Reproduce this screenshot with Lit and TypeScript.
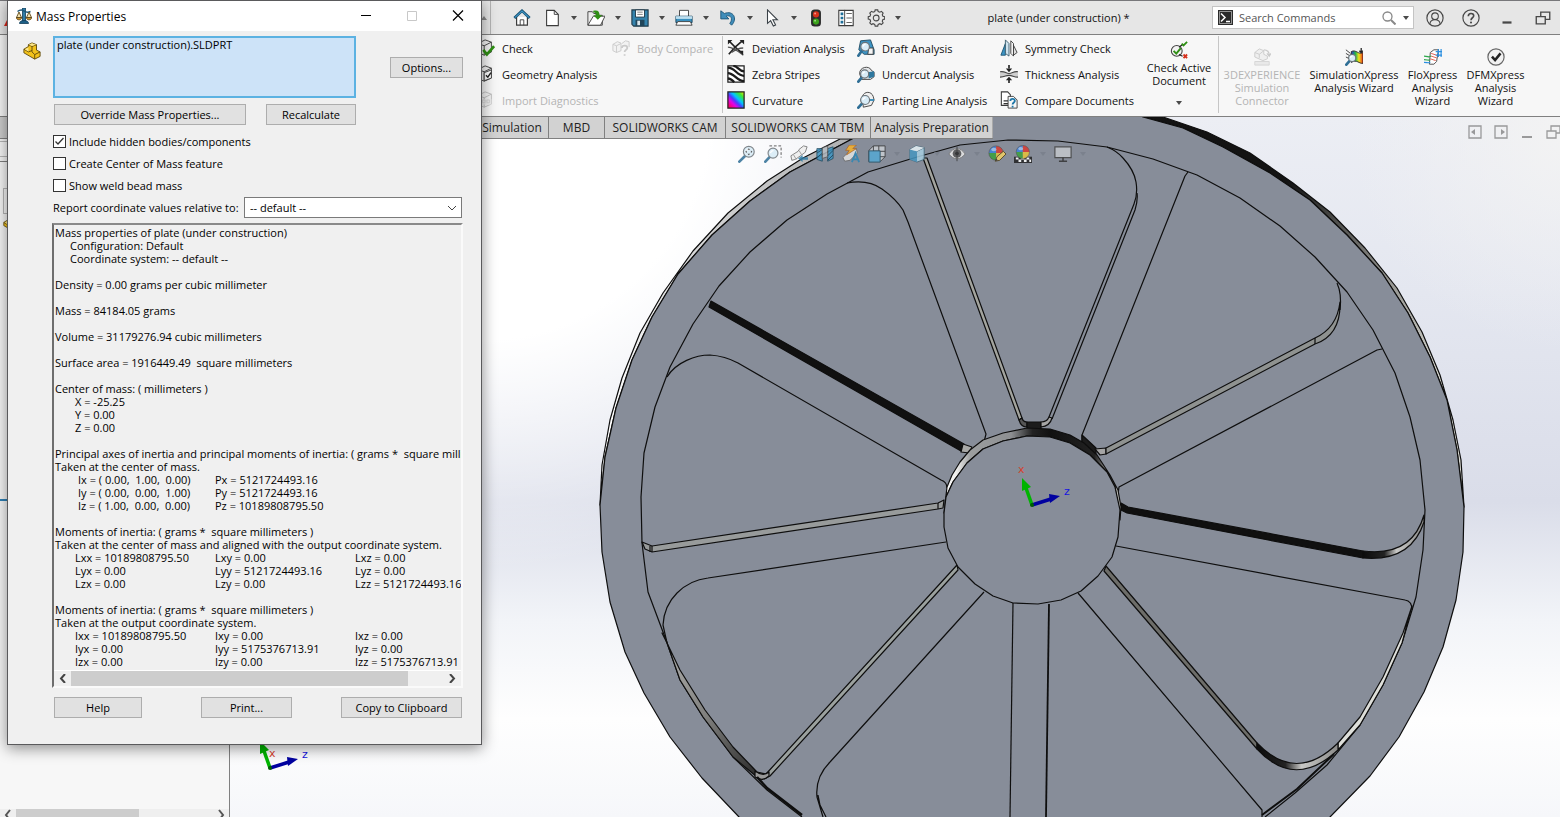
import { LitElement, html, svg, css } from "lit";
import { customElement, state } from "lit/decorators.js";

const K = "#3c3c3c";
const B = "#1f6f99";

/* Shared 20x20 glyphs */
const lens = (x: number, y: number, r: number) => svg`
  <path d="M${x - r * 0.6} ${y + r * 0.7}L1.5 18.5" stroke="#2f6f96" stroke-width="3" stroke-linecap="round"/>
  <circle cx=${x} cy=${y} r=${r} fill="#d8ecf7" stroke="#6b7378" stroke-width="1.3"/>
  <path d="M${x - r * 0.5} ${y}a${r * 0.6} ${r * 0.6} 0 0 1 ${r * 0.6} ${-r * 0.5}" stroke="#fff" stroke-width="1.4" fill="none"/>`;

const cube = svg`<path d="M1 5L9 1l7 2.5v11L8 18l-7-3z" fill="#f2f2f2" stroke="${K}"/><path d="M1 5l7 2.5L16 3.500M8 7.500V18" fill="none" stroke="${K}"/>`;

const ball = svg`
  <path d="M9 9L9 1A8 8 0 0 0 1 9z" fill="#3d82dd"/><path d="M9 9V1a8 8 0 0 1 8 8z" fill="#d93a32"/>
  <path d="M9 9H1a8 8 0 0 0 8 8z" fill="#3aa03c"/><path d="M9 9h8a8 8 0 0 1-8 8z" fill="#e8c43a"/>
  <ellipse cx="6.500" cy="5" rx="3" ry="2" fill="#fff" opacity=".5"/><circle cx="9" cy="9" r="8" fill="none" stroke="#444" stroke-width=".6"/>`;

const part = svg`<path d="M1 8l5-3V3l4-2 5 2v6l4 2v5l-6 3L1 12z" fill="#f2c21b" stroke="#5e480a"/><path d="M6 3l4 2 5-2M10 5v6l3 3 6-3M13 14v5M1 8l5 3 4-1.500" fill="none" stroke="#5e480a"/><path d="M6.500 3L10 1.500 14.500 3 10 4.500zM2 8l4-2v4.500z" fill="#fbe68c"/>`;

const icons: Record<string, unknown> = {
  home: svg`<path d="M4 9v9h12V9" fill="#fff" stroke="${K}" stroke-width="1.300"/><path d="M8 18v-6h4v6" fill="none" stroke="${K}"/><path d="M1.500 10L10 2l8.500 8" fill="none" stroke="#174f70" stroke-width="3"/><path d="M2 9.500L10 2.200l8 7.300" fill="none" stroke="#3d94c4" stroke-width="1.200"/>`,
  file: svg`<path d="M4 1.500h8.500L17 6v12.500H4z" fill="#fff" stroke="${K}" stroke-width="1.200"/><path d="M12.500 1.500V6H17" fill="none" stroke="${K}"/>`,
  open: svg`<path d="M1 18V3h5l1.500 2H10v2h7v11z" fill="#ececec" stroke="${K}"/><path d="M1 18L7 8h13l-5 10z" fill="#fff" stroke="${K}"/><path d="M7 2c5-1.500 7 1 7 5h3l-5 5-5-5h3c0-2-.5-3.500-3-3z" fill="#2f8f14"/>`,
  save: svg`<path d="M1 1h18v18H3l-2-2z" fill="#3583ad" stroke="#1d3746" stroke-width="1.200"/><path d="M5 1h10v8H5z" fill="#fff" stroke="#1d3746"/><path d="M7 3.500h6M7 6h6" stroke="#777"/><path d="M5 12h10v7H5z" fill="#22465a"/><path d="M7 13h3v5H7z" fill="#dce6ec"/>`,
  print: svg`<path d="M5 8V1.500h10V8" fill="#fff" stroke="${K}"/><path d="M1 8h18v7H1z" fill="#3a91c0" stroke="#173f57"/><path d="M1 8h18v3H1z" fill="#bfe0f0"/><path d="M3 14h14l2 4H1z" fill="#fff" stroke="${K}"/>`,
  undo: svg`<path d="M2 2v9h9L8 8c5-2 8 3 4 8l2 2C21 11 16 1 6 5z" fill="#3f8dba" stroke="#1d5677"/>`,
  cursor: svg`<path d="M5 1v15l3.500-3 3 6 2.500-1.200-3-5.800H16z" fill="#fff" stroke="#3b4248" stroke-width="1.200"/>`,
  light: svg`<rect x="4.500" y=".5" width="11" height="19" rx="4" fill="#2c2c2c"/><circle cx="10" cy="6" r="3.400" fill="#d6301c"/><circle cx="10" cy="14" r="3.400" fill="#3ca31c"/><circle cx="9" cy="5" r="1" fill="#f7a090"/><circle cx="9" cy="13" r="1" fill="#a5e28e"/>`,
  list: svg`<path d="M2 1.500h16v17H2z" fill="#fff" stroke="${K}" stroke-width="1.200"/><path d="M8.500 1v18" stroke="${K}"/><path d="M4 4h3v3H4zM4 8.500h3v3H4zM4 13h3v3H4z" fill="${B}"/><path d="M10.500 5h6M10.500 10h6M10.500 15h6" stroke="#555"/>`,
  gear: svg`<path d="M8.500 1.500h3l.5 2 2 .8 1.800-1 2 2-1 1.900.8 1.900 2 .5v2.800l-2 .5-.8 2 1 1.800-2 2-1.900-1-1.900.8-.5 2h-3l-.5-2-2-.8-1.800 1-2-2 1-1.900-.8-1.900-2-.5V9.600l2-.5.8-2-1-1.800 2-2 1.900 1 1.900-.8z" transform="translate(1 -.5) scale(.95)" fill="none" stroke="#484848" stroke-width="1.300"/><circle cx="10.200" cy="10" r="3.200" fill="none" stroke="#484848" stroke-width="1.200"/>`,
  user: svg`<circle cx="10" cy="10" r="9" fill="none" stroke="#484848" stroke-width="1.300"/><circle cx="10" cy="8" r="3.700" fill="none" stroke="#484848" stroke-width="1.200"/><path d="M4.500 16.500c0-6 11-6 11 0" fill="none" stroke="#484848" stroke-width="1.200"/>`,
  help: svg`<circle cx="10" cy="10" r="9" fill="none" stroke="#484848" stroke-width="1.300"/><path d="M7 8c0-4 6-4 6-.5 0 2.300-3 2.200-3 5" fill="none" stroke="#484848" stroke-width="1.800"/><circle cx="10" cy="15" r="1.200" fill="#484848"/>`,
  min: svg`<path d="M5 15h10" stroke="#484848" stroke-width="2.500"/>`,
  restore: svg`<path d="M2.500 8.500h10v8h-10zM7.500 8.500v-5h10v8h-5" fill="none" stroke="#484848" stroke-width="1.500"/>`,
  check: svg`${cube}<path d="M7 12l4 5 8-9" fill="none" stroke="#2f8f14" stroke-width="3"/>`,
  geometry: svg`${cube}<path d="M8 8.500l8-3v9l-8 3z" fill="#fff" stroke="${K}"/><path d="M10 11.500l2 2 3.500-5" fill="none" stroke="#222" stroke-width="1.600"/>`,
  importD: svg`${cube}<path d="M1 9h15v6H1z" fill="#ddd"/><path d="M3 9v5M6 10h3v3H6zM11 10h3v3h-3z" stroke="#888" fill="none"/>`,
  compareB: svg`<path d="M1 6l5-3 4 1.500V13l-5 2-4-2zM11 5l4-3 4 1v6" fill="#e8e8e8" stroke="#666"/><path d="M1 6l4 1.500L10 5M5 7.500V15" fill="none" stroke="#666"/><path d="M11 10c0-3.500 6-3.500 6 0 0 2-3 2-3 4.500M14 17v1.500" fill="none" stroke="#666" stroke-width="2"/>`,
  deviation: svg`<path d="M2 2l7 7 8-7M9 9L2 17M9 9l8 7" fill="none" stroke="#222" stroke-width="1.800"/><path d="M1 1h5L1 6zM19 1h-5l5 5z" fill="#222"/><path d="M1 9c6 0 12 5 17 9M5 15c4-3 8-5 13-5" fill="none" stroke="#555" stroke-width="1.400"/><path d="M13 13h5v5z" fill="#222"/>`,
  zebra: svg`<path d="M1 1h18v18H1z" fill="#fff" stroke="#222" stroke-width="1.400"/><path d="M1 3c8 0 10 9 18 9M1 9c7 0 10 9 18 9M7 1c5 0 6 6 12 6M1 15c3 0 5 2 7 4" fill="none" stroke="#1c1c1c" stroke-width="2.600"/>`,
  curvature: svg`<path d="M1 1h18v18H1z" fill="url(#spectrum)" stroke="#222" stroke-width="1.400"/>`,
  draft: svg`<path d="M2 12L4 2l11-1 4 11v5H8z" fill="#3d94c4" stroke="#204a60"/><path d="M13 10h5v7h-6z" fill="#f4f4f4" stroke="${K}"/>${lens(9, 8.5, 4.8)}`,
  undercut: svg`<path d="M3 10C2 2 14 0 16 6l3 2v5l-4 3H5z" fill="#e4e6e8" stroke="${K}"/><path d="M12 8l7-1v6l-6 2z" fill="#2e789f"/>${lens(8.5, 10, 4.5)}`,
  parting: svg`<path d="M6 6c2-6 10-6 12 0l1 4-3 6-9 2z" fill="#f0f0f0" stroke="${K}"/><path d="M13 10h6" stroke="#2e86b5" stroke-width="2"/>${lens(9, 10, 5)}`,
  symmetry: svg`<path d="M1 18L6 5v13z" fill="#3d94c4" stroke="#1c5371"/><path d="M6 1l4 4v14l-4-3z" fill="#cfe3ee" stroke="#3a5b6b"/><path d="M12 2l3 3v14l-3-3z" fill="#f4f4f4" stroke="${K}"/><path d="M15 7l4 8-4 3z" fill="#e0e0e0" stroke="${K}"/>`,
  thickness: svg`<path d="M0 8c6-1 6 2 10 2s5-3 10-2v6c-5-1-6-2-10-2s-5 1-10 2z" fill="#cfcfcf"/><path d="M0 7.500c6-1 6 2 10 2s5-3 10-2M0 13.500c6 0 6-2 10-2s5 2 10 2" fill="none" stroke="#444" stroke-width="1.200"/><path d="M10 0v4M10 16v4" stroke="#222" stroke-width="1.800"/><path d="M6.500 4h7L10 8zM6.500 17h7L10 13z" fill="#222"/>`,
  compareD: svg`<path d="M1.500 1h7l3 3v12h-10z" fill="#fff" stroke="${K}" stroke-width="1.200"/><path d="M4 11h5M4 14h5" stroke="#333" stroke-width="1.500"/><path d="M9 6h6l4 4v9H9z" fill="#f8f8f8" stroke="${K}"/><path d="M11.500 11c0-3 5-3 5 0 0 1.600-2.500 2-2.500 4M14 16.500v1.700" fill="none" stroke="#1f77a8" stroke-width="2"/>`,
  active: svg`<circle cx="7.500" cy="11" r="6" fill="#f2f2f2" stroke="#444" stroke-width="1.200"/><path d="M4 11l3 3 5-6" fill="none" stroke="#2f8f14" stroke-width="2.200"/><path d="M10 7l4-3M10 15l4 2" stroke="#222" stroke-width="1.400"/><path d="M13 3l2 2 4-4" fill="none" stroke="#2f8f14" stroke-width="2"/><path d="M15 15l4 4M19 15l-4 4" stroke="#d6301c" stroke-width="2"/>`,
  threeD: svg`<path d="M2 5l5-4 5 2v4l4 2v3l-5 2-9-4z" fill="#ddd" stroke="#666"/><path d="M2 5l5 2v4M7 7l5-4" fill="none" stroke="#666"/><path d="M12 2c5 0 6 3 6 6M15.500 6L18 9l2-3" fill="none" stroke="#666" stroke-width="1.400"/><path d="M2 15h16v4H2z" fill="#ccc" stroke="#888"/>`,
  simx: svg`<path d="M7 4c5-3 8 4 13 1v12c-4 1-7-5-13-1z" fill="url(#spectrum2)" stroke="#222"/><path d="M1 2l5 4M1 6l5 3M1 10l4 2" stroke="#333"/><path d="M18 0v5M16 3l2 2 2-2" stroke="#222" fill="none" stroke-width="1.400"/>${lens(8, 11, 4)}`,
  flo: svg`<path d="M7 5l4-3h5l-2 13-3 3H6z" fill="#fff" stroke="#444"/><path d="M8 6l6 2M8 9l6 2M7 12l6 2" stroke="#e0503f"/><path d="M0 9c5 0 5 2 8 0M0 13c4 0 5 1 7 0" fill="none" stroke="#2ea84d" stroke-width="1.300"/><path d="M0 16c4 0 4 1 7 0M13 4h7M13 8h7M16 1v9M19 1v9" fill="none" stroke="#2b8fe0" stroke-width="1.300"/>`,
  dfm: svg`<circle cx="10" cy="10" r="9" fill="#f1f1f1" stroke="#666" stroke-width="1.300"/><path d="M5.500 9.500l3.500 4 6-7.500" fill="none" stroke="#222" stroke-width="2.800"/>`,
  fit: svg`${lens(12, 7.5, 6)}<path d="M12 3.500l1.500 1.700h-3zM12 11.500l1.500-1.700h-3zM8 7.500l1.700-1.500v3zM16 7.500l-1.700-1.500v3z" fill="#333"/>`,
  area: svg`<path d="M6 1h13v13" fill="none" stroke="#333" stroke-dasharray="3 2"/>${lens(10, 9, 5.5)}`,
  prev: svg`<path d="M1 12l8-5 1-2 5-4 4 1-2 6-4 3-7 5-4 1z" fill="#eee" stroke="#666"/><path d="M4 11l3 5M10 6l3 5" stroke="#888"/><path d="M9 15l5-4v2.500h6v3h-6V19z" fill="#2f7ba5"/>`,
  section: svg`<path d="M1 4h6v14l-6-2zM13 4l6-2v13l-6 3z" fill="#3f97c5" stroke="#1f485c"/><path d="M7 3l6-2v12l-6 2z" fill="#b5bcc2" stroke="#555"/><path d="M1 9l6-4M1 14l6-5M13 12l6-6M13 17l6-6" stroke="#123c52"/>`,
  dynamic: svg`<path d="M1 14L10 5l6-1 1 5-8 8-6 1z" fill="#e4e4e4" stroke="#666"/><path d="M8 0h8l-4 4h4L5 11l3-5H4z" fill="#f6b22a" stroke="#a5541a" stroke-width=".7"/><path d="M11 19l4-10 4 10M12.500 16h5" fill="none" stroke="#2e86b5" stroke-width="2"/>`,
  orient: svg`<path d="M6 1h13v12l-5 5H1V6z" fill="#c9ced3" stroke="#333"/><path d="M6 1v12h13M6 13l-5 5M12 1v12M6 7h13" fill="none" stroke="#333"/><path d="M1 6.500h12.500V19H1z" fill="#55a9d3" stroke="#1f485c"/>`,
  style: svg`<path d="M2 5l7-4 9 2v13l-8 3-8-3z" fill="#a8cfe2" stroke="#3f6477"/><path d="M2 5l8 2v12l-8-3z" fill="#4796bf"/><path d="M10 7l8-4" stroke="#3f6477"/><path d="M2 5l7-4 9 2-8 4z" fill="#e8f2f6"/>`,
  eye: svg`<path d="M1 10c5-8 13-8 18 0-5 7-13 7-18 0z" fill="#e8e8e8" stroke="#777"/><circle cx="10" cy="9.500" r="4.800" fill="#555"/><circle cx="10" cy="9.500" r="2" fill="#222"/><path d="M10 2v16" stroke="#333"/>`,
  appear: svg`${ball}<path d="M8 18l2-5 7-6 3 3-7 7z" fill="#f1cf63" stroke="#4a3b14"/><path d="M8 18l1-3 2 2z" fill="#333"/>`,
  scene: svg`<path d="M0 13h20v7H0z" fill="#222"/><path d="M2 14h3v2H2zM8 14h3v2H8zM14 14h3v2h-3zM5 16h3v3H5zM11 16h3v3h-3zM17 16h2v3h-2z" fill="#fff"/><g transform="translate(1.500 -.5) scale(.92)">${ball}</g>`,
  screen: svg`<path d="M1 2h18v12H1z" fill="#c3c7cc" stroke="#444" stroke-width="1.300"/><path d="M10 14v4M5.500 18h9" stroke="#333" stroke-width="1.700"/>`,
};

const ic = (name: string, cls = "") => html`<svg class="ic ${cls}" viewBox="0 0 20 20" aria-hidden="true">${icons[name]}</svg>`;
const caret = () => html`<svg class="caret" viewBox="0 0 6 4" aria-hidden="true"><path d="M0 0h6L3 4z" fill="currentColor"/></svg>`;

/* Part model, drawn in the coordinates of the graphics area */
const face = "739,817 702,778 670,737 644,693 625,652 610,602 602,552 600,505 605,457 616,408 632,360 652,317 678,274 712,235 750,201 790,172 852,139 920,110 1130,110 1143,117 1183,128 1223,147 1270,173 1310,200 1347,235 1382,273 1408,313 1430,357 1447,400 1457,450 1464,507 1463,552 1456,600 1443,647 1424,692 1399,737 1370,776 1330,817 1330,830 739,830";
const rimRight = "1143,117 1163,117 1207,132 1250,153 1293,183 1330,212 1365,248 1397,288 1422,332 1440,375 1453,420 1461,460 1464,507 1457,450 1447,400 1430,357 1408,313 1382,273 1347,235 1310,200 1270,173 1223,147 1183,128";
const rimLeft = "852,139 840,139 803,158 767,181 728,213 693,251 663,293 640,333 622,378 610,420 602,465 600,505 605,457 616,408 632,360 652,317 678,274 712,235 750,201 790,172";
const innerRing = "802,817 767,790 733,757 703,717 680,680 666,640 648,592 642,543 641,497 644,453 655,407 670,367 693,324 719,286 750,252 787,220 827,194 868,172 917,157 960,145 1008,140 1058,141 1107,147 1153,159 1197,175 1240,198 1280,226 1315,257 1347,292 1373,330 1395,373 1410,417 1420,460 1425,510 1423,550 1416,597 1402,643 1383,685 1360,725 1327,765 1295,793 1265,817";
const hub = "944,513 944,527 948,548 958,567 975,584 993,596 1013,603 1038,604 1061,600 1081,591 1098,576 1112,557 1118,537 1120,510 1115,487 1107,472 1090,455 1070,443 1050,437 1027,436 1003,441 983,449 967,463 953,482 946,497";
const hubWall = "944,513 947,487 952,475 960,462 970,450 983,440 1003,433 1027,428 1050,429 1070,435 1084,443 1097,455 1110,475 1118,490 1121,507 1120,520 1115,487 1107,472 1090,455 1070,443 1050,437 1027,436 1003,441 983,449 967,463 953,482 946,497";

const triad = (x: number, y: number, labelX: number, labelY: number) => svg`
  <g transform="translate(${x} ${y})">
    <path d="M0 0L-6-17" stroke="#00b400" stroke-width="3.500"/><path d="M-10-27l9 9-9 4z" fill="#00b400"/>
    <path d="M0 0L19-6" stroke="#0000a0" stroke-width="3.500"/><path d="M17-11l11 2-10 7z" fill="#0000a0"/>
    <circle cx="0" cy="0" r="2" fill="#006000"/>
    <text x="32" y="-10" class="axis z">z</text><text x=${labelX} y=${labelY} class="axis x">x</text>
  </g>`;

const scene = svg`
  <defs>
    <linearGradient id="sky" x1="0" y1="0" x2="0" y2="1">
      <stop offset="0" stop-color="#eceef4"/><stop offset=".25" stop-color="#e4e7f0"/><stop offset=".55" stop-color="#dadde9"/><stop offset=".72" stop-color="#f2f4f8"/><stop offset=".86" stop-color="#fefefe"/><stop offset="1" stop-color="#f6f7fa"/>
    </linearGradient>
    <radialGradient id="glow" gradientUnits="userSpaceOnUse" cx="480" cy="110" r="460"><stop offset="0" stop-color="#fff"/><stop offset=".5" stop-color="#fff"/><stop offset="1" stop-color="#fff" stop-opacity="0"/></radialGradient>
    <radialGradient id="corner" gradientUnits="userSpaceOnUse" cx="1570" cy="130" r="220"><stop offset="0" stop-color="#f3f3f3"/><stop offset="1" stop-color="#f0f0f2" stop-opacity="0"/></radialGradient>
    <linearGradient id="rimR" gradientUnits="userSpaceOnUse" x1="1290" y1="180" x2="1440" y2="380"><stop offset="0" stop-color="#131313"/><stop offset=".5" stop-color="#8c8c88"/><stop offset="1" stop-color="#d9d9d2"/></linearGradient>
    <linearGradient id="rimL" gradientUnits="userSpaceOnUse" x1="850" y1="139" x2="610" y2="420"><stop offset="0" stop-color="#b0b1b2"/><stop offset="1" stop-color="#fff"/></linearGradient>
    <linearGradient id="wall"><stop offset="0" stop-color="#fff"/><stop offset=".07" stop-color="#f0f0ee"/><stop offset=".15" stop-color="#9c9e9f"/><stop offset=".38" stop-color="#8d8f92"/><stop offset=".5" stop-color="#222"/><stop offset=".6" stop-color="#111"/><stop offset=".85" stop-color="#222"/><stop offset=".95" stop-color="#c4c4bf"/></linearGradient>
    <linearGradient id="bend"><stop offset="0" stop-color="#0c0c0c"/><stop offset=".35" stop-color="#222"/><stop offset=".55" stop-color="#c8c8c6"/><stop offset="1" stop-color="#8b8b89"/></linearGradient>
    <linearGradient id="low" x1="0" y1="0" x2="1" y2="1"><stop offset="0" stop-color="#b4b4b2"/><stop offset=".5" stop-color="#80807e"/><stop offset="1" stop-color="#222"/></linearGradient>
  </defs>
  <rect x="0" y="117" width="1560" height="700" fill="url(#sky)"/>
  <rect x="0" y="117" width="1560" height="700" fill="url(#glow)"/>
  <rect x="0" y="117" width="1560" height="700" fill="url(#corner)"/>
  <g stroke="#0e0e0e" stroke-width="1.200" stroke-linejoin="round" fill="none">
    <polygon points=${rimRight} fill="url(#rimR)"/>
    <polygon points=${rimLeft} fill="url(#rimL)"/>
    <polygon points=${face} fill="#878d99"/>
    <polyline points=${innerRing}/>
    <path d="M847 183Q868 179 882 189T903 210L908 222L986 434L984 442"/>
    <path d="M667 377C676 362 696 355 710 355Q725 356 738 363L941 480Q947 482 947 488"/>
    <polygon points="711,301 964,444 961,451 709,307" fill="#101010"/>
    <path d="M963 444l9 3-3 6-8-1z" fill="#a9a9a7"/>
    <path d="M972 447l12-9v7l-12 10z" fill="#8f9194" stroke="none"/>
    <polygon points="923,158 1019,420 1022,418 927,158" fill="#a3a49e"/>
    <path d="M1019 420q2 7 8 7v-5q-4 0-5-4z" fill="#555"/>
    <path d="M1027 422h14v8h-14z" fill="#1c1c1c"/>
    <path d="M1041 422q6 0 8-5l3 1q-2 8-11 9z" fill="#a5a5a5"/>
    <path d="M1049 417L1134 204Q1138 194 1136 182T1123 158Q1117 151 1107 147"/>
    <path d="M1052 419L1135 210Q1138 200 1137 193"/>
    <polyline points="1082,441 1082,435 1185,176 1188,172"/>
    <path d="M1082 435l14 13v8l-14-13z" fill="#1c1c1c"/>
    <path d="M1095 449l11-1v6l-6 1z" fill="#a5a5a5"/>
    <path d="M1106 448L1315 338Q1337 328 1340 302Q1341 335 1315 344L1106 454z" fill="#8f9290"/>
    <path d="M1315 338V344M1340 310Q1342 294 1337 283"/>
    <polyline points="1118,494 1119,487 1377,350 1382,349"/>
    <polygon points="652,546 938,503 944,500 943,508 938,509 652,552 645,549 642,542" fill="#989b9b"/>
    <path d="M652 546v6M650 546v6M938 503v6"/>
    <path d="M946 542L708 578Q690 580 677 593T663 625L667 643"/>
    <polygon points="662,633 667,643 680,670 705,710 733,747 757,772 766,774 757,777 733,757 703,717 680,680 666,640" fill="url(#low)"/>
    <polygon points="957,565 766,774 764,779 770,776 958,570" fill="#9ba19e"/>
    <path d="M755 771q8 6 14 1v4q-6 6-14 1z" fill="#999"/>
    <polyline points="757,777 767,788 802,815" stroke-width="2.500"/>
    <path d="M984 592L830 762Q815 777 817 797L823 817M818 795L820 805L826 817"/>
    <path d="M1013 603L1010 817"/><path d="M1049 604L1046 817" stroke-width="1.800"/>
    <polygon points="1121,503 1128,507 1363,551 1363,558 1127,513 1121,510" fill="#101010"/>
    <path d="M1363 551Q1412 557 1424 515V522Q1411 562 1363 558z" fill="url(#bend)"/>
    <path d="M1116 546L1405 600Q1412 601 1412 610"/>
    <polygon points="1412,606 1403,633 1383,677 1360,717 1338,743 1338,750 1360,725 1383,685 1402,643" fill="#dedfda"/>
    <polygon points="1106,566 1257,743 1257,749 1104,571" fill="#6d6d69"/>
    <path d="M1257 743Q1296 784 1338 743V750Q1295 790 1257 749z" fill="url(#bend)"/>
    <polyline points="1334,754 1297,789 1262,815" stroke-width="2"/>
    <polyline points="1078,593 1262,810 1262,817"/>
    <polygon points=${hubWall} fill="url(#wall)"/>
    <polygon points=${hub} fill="#878d99"/>
  </g>
  ${triad(1032, 505, -14, -32)}
  ${triad(270, 768, -1, -11)}`;

const principal = [
  ["Ix = ( 0.00,  1.00,  0.00)", "Px = 5121724493.16"],
  ["Iy = ( 0.00,  0.00,  1.00)", "Py = 5121724493.16"],
  ["Iz = ( 1.00,  0.00,  0.00)", "Pz = 10189808795.50"],
];
const centroidal = [
  ["Lxx = 10189808795.50", "Lxy = 0.00", "Lxz = 0.00"],
  ["Lyx = 0.00", "Lyy = 5121724493.16", "Lyz = 0.00"],
  ["Lzx = 0.00", "Lzy = 0.00", "Lzz = 5121724493.16"],
];
const output = [
  ["Ixx = 10189808795.50", "Ixy = 0.00", "Ixz = 0.00"],
  ["Iyx = 0.00", "Iyy = 5175376713.91", "Iyz = 0.00"],
  ["Izx = 0.00", "Izy = 0.00", "Izz = 5175376713.91"],
];

@customElement("mass-properties")
class MassProperties extends LitElement {
  @state() private includeHidden = true;

  static styles = css`
    :host { display: block; box-sizing: border-box; background: #f0f0f0; border: 1px solid #5a5a5c; color: #000;
      font: 11px/13px "Open Sans", "Noto Sans", sans-serif; box-shadow: 0 3px 14px rgba(0, 0, 0, .45); }
    * { box-sizing: border-box; }
    button, select { font: inherit; color: inherit; margin: 0; }
    .bar { display: flex; align-items: center; height: 30px; background: #fff; padding-left: 8px; font-size: 12px; }
    .bar h1 { font: inherit; margin: 0 auto 0 4px; }
    .bar button { width: 46px; height: 30px; padding: 0; border: 0; background: none; display: grid; place-items: center; }
    .bar svg { width: 16px; height: 16px; }
    .body { display: grid; grid-template-columns: 30px 411px; padding: 5px 0 26px 14px; }
    .part { width: 18px; height: 18px; margin: 6px 0 0 1px; }
    .top { display: flex; align-items: center; justify-content: space-between; padding-left: 1px; }
    .name { width: 303px; height: 62px; border: 2px solid #5cb2e2; background: #cde3f8; padding: 0 2px; }
    .btn { height: 21px; padding: 0; border: 1px solid #adadad; background: #e1e1e1; }
    .options { width: 73px; }
    .actions { display: flex; gap: 20px; padding: 6px 0 5px 2px; }
    .override { width: 192px; }
    .recalc { width: 90px; }
    .tick { display: flex; align-items: center; gap: 3px; height: 22px; padding-left: 1px; }
    .tick input { appearance: none; width: 13px; height: 13px; margin: 0; border: 1px solid #333; background: #fff; }
    .tick input:checked { background: #fff url("data:image/svg+xml,%3Csvg xmlns='http://www.w3.org/2000/svg' viewBox='0 0 11 11'%3E%3Cpath d='M1.500 5.500l2.500 2.500 5.500-6' fill='none' stroke='%23333' stroke-width='1.300'/%3E%3C/svg%3E"); }
    .relative { display: flex; align-items: center; justify-content: space-between; padding: 1px 1px 5px; }
    .relative select { appearance: none; width: 218px; height: 21px; padding: 0 5px; border: 1px solid #7a7a7a; border-radius: 0;
      background: #fff url("data:image/svg+xml,%3Csvg xmlns='http://www.w3.org/2000/svg' viewBox='0 0 10 6'%3E%3Cpath d='M1 1l4 4 4-4' fill='none' stroke='%23444'/%3E%3C/svg%3E") right 4px center / 10px 6px no-repeat; }
    .report { height: 465px; display: flex; flex-direction: column; border: 2px solid; border-color: #8a8a8a #fafafa #fafafa #6e6e6e; }
    .text { flex: 1; min-height: 0; overflow: hidden; padding: 1px 0 0 1px; }
    .text p { margin: 0 0 13px; white-space: pre; }
    .text .close { margin: 0; }
    .in15 { padding-left: 15px; }
    .in20 { padding-left: 20px; }
    table { border-collapse: collapse; table-layout: fixed; width: 420px; margin: 0 0 13px 20px; }
    .output { margin-bottom: 0; }
    td { width: 140px; padding: 0; white-space: pre; }
    .axes { width: 280px; }
    .axes td:first-child { padding-left: 3px; }
    .scroll { display: flex; flex: none; align-items: center; height: 16px; border-top: 1px solid #fff; }
    .scroll svg { width: 17px; height: 9px; }
    .thumb { height: 15px; width: 337px; margin-right: auto; background: #cdcdcd; }
    .foot { display: flex; padding: 9px 1px 0 2px; }
    .help { width: 88px; margin-right: 59px; }
    .print { width: 91px; margin-right: auto; }
    .copy { width: 121px; }
  `;

  private rows(data: string[][], cls = "") {
    return html`<table class=${cls}><tbody>${data.map((r) => html`<tr>${r.map((c) => html`<td>${c}</td>`)}</tr>`)}</tbody></table>`;
  }

  render() {
    return html`
      <div class="bar">
        <svg viewBox="0 0 16 16"><path d="M6.500 0h3v13h-3z" fill="#2f7ba5" stroke="#123d59" stroke-width=".8"/><path d="M1.500 3.500Q5 1 8 3t6.500.5" fill="none" stroke="#1d5677" stroke-width="1.500"/><path d="M3.500 15.500q0-3 4.500-3t4.500 3z" fill="#1d6088" stroke="#123d59" stroke-width=".8"/><path d="M3 4L.5 9.500h5zM13 4l-2.500 5.500h5z" fill="#f3e3b4" stroke="#5c4717" stroke-width=".9"/><path d="M0 9.500h6q-1 2.500-3 2.500T0 9.500zM10 9.500h6q-1 2.500-3 2.500T10 9.500z" fill="#c9912b" stroke="#4c3d1c" stroke-width=".7"/></svg>
        <h1>Mass Properties</h1>
        <button aria-label="Minimize"><svg viewBox="0 0 16 16"><path d="M3 7.500h10" stroke="#000"/></svg></button>
        <button aria-label="Maximize" disabled><svg viewBox="0 0 16 16"><path d="M3.500 3.500h9v9h-9z" fill="none" stroke="#c8c8c8"/></svg></button>
        <button aria-label="Close"><svg viewBox="0 0 16 16"><path d="M3 2.500l10 10M13 2.500l-10 10" stroke="#000" stroke-width="1.200"/></svg></button>
      </div>
      <div class="body">
        <svg class="part" viewBox="0 0 20 20">${part}</svg>
        <div>
          <div class="top"><div class="name">plate (under construction).SLDPRT</div><button class="btn options">Options...</button></div>
          <div class="actions"><button class="btn override">Override Mass Properties...</button><button class="btn recalc">Recalculate</button></div>
          <label class="tick"><input type="checkbox" .checked=${this.includeHidden} @change=${() => (this.includeHidden = !this.includeHidden)}>Include hidden bodies/components</label>
          <label class="tick"><input type="checkbox">Create Center of Mass feature</label>
          <label class="tick"><input type="checkbox">Show weld bead mass</label>
          <div class="relative"><label for="cs">Report coordinate values relative to:</label><select id="cs"><option>-- default --</option></select></div>
          <div class="report">
            <div class="text">
              <p class="close">Mass properties of plate (under construction)</p>
              <p class="close in15">Configuration: Default</p>
              <p class="in15">Coordinate system: -- default --</p>
              <p>Density = 0.00 grams per cubic millimeter</p>
              <p>Mass = 84184.05 grams</p>
              <p>Volume = 31179276.94 cubic millimeters</p>
              <p>Surface area = 1916449.49  square millimeters</p>
              <p class="close">Center of mass: ( millimeters )</p>
              <p class="close in20">X = -25.25</p>
              <p class="close in20">Y = 0.00</p>
              <p class="in20">Z = 0.00</p>
              <p class="close">Principal axes of inertia and principal moments of inertia: ( grams *  square millimeters )</p>
              <p class="close">Taken at the center of mass.</p>
              ${this.rows(principal, "axes")}
              <p class="close">Moments of inertia: ( grams *  square millimeters )</p>
              <p class="close">Taken at the center of mass and aligned with the output coordinate system.</p>
              ${this.rows(centroidal)}
              <p class="close">Moments of inertia: ( grams *  square millimeters )</p>
              <p class="close">Taken at the output coordinate system.</p>
              ${this.rows(output, "output")}
            </div>
            <div class="scroll"><svg viewBox="0 0 17 9"><path d="M11 0L7 4.500 11 9" fill="none" stroke="#444" stroke-width="2"/></svg><div class="thumb"></div><svg viewBox="0 0 17 9"><path d="M6 0l4 4.500L6 9" fill="none" stroke="#444" stroke-width="2"/></svg></div>
          </div>
          <div class="foot"><button class="btn help">Help</button><button class="btn print">Print...</button><button class="btn copy">Copy to Clipboard</button></div>
        </div>
      </div>`;
  }
}

@customElement("app-root")
export class AppRoot extends LitElement {
  static styles = css`
    :host { display: flex; flex-direction: column; position: relative; height: 100vh; overflow: hidden; background: #f7f7f7; color: #111;
      font: 11px/13px "Open Sans", "Noto Sans", sans-serif; }
    * { box-sizing: border-box; }
    button { font: inherit; color: inherit; margin: 0; padding: 0; border: 0; background: none; }
    .ic { width: 18px; height: 18px; flex: none; display: block; }
    .caret { width: 6px; height: 4px; display: block; color: #4a4a4a; }
    header { display: flex; align-items: center; height: 35px; flex: none; background: #e6e6e6; border-top: 1px solid #77777a; border-bottom: 1px solid #808080; }
    header button { width: 22px; height: 22px; display: grid; place-items: center; }
    .brand { display: flex; align-items: center; justify-content: space-between; width: 491px; height: 33px; margin-right: 20px; padding-right: 3px; border-right: 1px solid #b4b4b4; flex: none; }
    .logo { width: 8px; height: 8px; margin-top: 8px; }
    .gap { margin-right: 8px; }
    .title { flex: 1; text-align: center; padding-right: 4px; }
    .search { display: flex; align-items: center; width: 202px; height: 23px; padding: 0 4px 0 5px; background: #fff; border: 1px solid #c4c4c4; }
    .search input { flex: 1; min-width: 0; margin-left: 6px; padding: 0; border: 0; outline: 0; background: none; font: inherit; }
    .search input::placeholder { color: #555; }
    .search .glass { width: 14px; height: 14px; margin-right: 7px; }
    .prompt { width: 15px; height: 15px; }
    .window { display: flex; gap: 14px; padding: 0 6px 0 10px; }
    .ribbon { display: flex; flex: none; height: 82px; padding-left: 477px; border-bottom: 1px solid #808080; }
    .col { flex: none; width: 130px; }
    .c1 { width: 135px; }
    .c2 { width: 110px; }
    .c4 { width: 143px; }
    .c5 { width: 140px; }
    .tool { display: flex; align-items: center; gap: 7px; height: 26px; white-space: nowrap; }
    .off { color: #b4b4b4; }
    .off .ic { opacity: .3; }
    .line { width: 1px; margin: 1px 4px 3px 0; background: #c6c6c6; }
    .big { display: flex; flex-direction: column; align-items: center; gap: 2px; padding-top: 13px; text-align: center; flex: none; justify-content: flex-start; }
    .big .caret { margin-top: 12px; }
    .active { width: 78px; padding-top: 6px; }
    .xp { width: 84px; margin-left: -3px; }
    .sim { width: 100px; }
    .flo { width: 57px; }
    .dfm { width: 69px; }
    main { flex: 1; min-height: 0; position: relative; display: flex; flex-direction: column; }
    .scene { position: absolute; inset: 0; width: 100%; height: 100%; }
    .axis { font: 11px "DejaVu Sans", sans-serif; }
    .z { fill: #1414e0; }
    .x { fill: #d8402c; }
    nav { position: relative; display: flex; align-self: flex-start; height: 22px; font-size: 12px; padding-left: 476px; background: #cdcdcd; border-bottom: 1px solid #808080; }
    nav button { border-right: 1px solid #808080; background: #d2d2d2; color: #222; white-space: nowrap; text-align: center; }
    .t1 { width: 73px; }
    .t2 { width: 56px; }
    .t3 { width: 121px; }
    .t4 { width: 145px; }
    .t5 { width: 122px; border-right-color: #aaa; }
    .work { position: relative; flex: 1; min-height: 0; display: flex; align-items: stretch; }
    .tree { display: flex; flex-direction: column; width: 230px; flex: none; background: #f7f7f7; border-right: 1px solid #808080; }
    .strip { height: 16px; margin: 2px 0 4px; border: solid #b8b8b8; border-width: 1px 0; flex: none; }
    .branch { flex: 1; min-height: 0; border-top: 1px solid #808080; padding: 26px 0 0 3px; }
    .slot { width: 26px; height: 26px; border: 1px solid #b8b8b8; }
    .node { width: 16px; height: 16px; display: block; margin-top: 2px; }
    .mark { height: 2px; background: #2f80b5; margin-bottom: 308px; }
    .track { display: flex; align-items: center; height: 8px; flex: none; overflow: hidden; background: #efefef; }
    .track svg { width: 16px; height: 8px; }
    .track span { width: 123px; height: 8px; background: #cdcdcd; margin-right: auto; }
    .hud { display: flex; align-items: center; align-self: flex-start; height: 30px; padding-left: 504px; opacity: .85; }
    .hud button { width: 26px; display: grid; place-items: center; }
    .hud .caret { width: 14px; color: #7a808c; }
    .docs { position: absolute; right: 0; top: 8px; display: flex; gap: 12px; opacity: .5; }
    .docs svg { width: 14px; height: 14px; }
    mass-properties { position: absolute; left: 7px; top: 0; width: 475px; height: 745px; }
  `;

  private tool(icon: string, label: string, off = false) {
    return html`<button class="tool ${off ? "off" : ""}" ?disabled=${off}>${ic(icon)}${label}</button>`;
  }
  private hud(icon: string) {
    return html`<button aria-label=${icon}>${ic(icon)}</button>`;
  }
  private quick(icon: string, cls = "", menu = false) {
    return html`<button class=${cls} aria-label=${icon}>${ic(icon)}</button>${menu ? html`<button aria-label="${icon} menu">${caret()}</button>` : ""}`;
  }

  render() {
    return html`
      <header>
        <div class="brand"><svg class="logo" viewBox="0 0 8 8"><path d="M8 0v8H4z" fill="#d9281c"/></svg><svg class="caret" viewBox="0 0 6 4"><path d="M0 4h6L3 0z" fill="#888"/></svg></div>
        ${this.quick("home", "gap")}${["file", "open", "save", "print", "undo", "cursor"].map((n) => this.quick(n, "", true))}
        ${this.quick("light", "gap")}${this.quick("list", "gap")}${this.quick("gear", "", true)}
        <div class="title">plate (under construction) *</div>
        <label class="search">
          <svg class="prompt" viewBox="0 0 15 15"><path d="M0 0h15v15H0z" fill="#2b2b2b"/><path d="M1.500 1.500h12v12h-12z" fill="none" stroke="#ddd" stroke-width=".6"/><path d="M3 3.500l4 4-4 4M8 11.500h4" fill="none" stroke="#fff" stroke-width="1.500"/></svg>
          <input type="search" placeholder="Search Commands" aria-label="Search Commands">
          <svg class="glass" viewBox="0 0 14 14"><circle cx="5.500" cy="5.500" r="4.500" fill="none" stroke="#888" stroke-width="1.300"/><path d="M9 9l4.500 4.500" stroke="#888" stroke-width="2"/></svg>${caret()}
        </label>
        <div class="window">${["user", "help", "min", "restore"].map((n) => this.quick(n))}</div>
      </header>
      <section class="ribbon">
        <div class="col c1">${this.tool("check", "Check")}${this.tool("geometry", "Geometry Analysis")}${this.tool("importD", "Import Diagnostics", true)}</div>
        <div class="col c2">${this.tool("compareB", "Body Compare", true)}</div>
        <div class="line"></div>
        <div class="col">${this.tool("deviation", "Deviation Analysis")}${this.tool("zebra", "Zebra Stripes")}${this.tool("curvature", "Curvature")}</div>
        <div class="col c4">${this.tool("draft", "Draft Analysis")}${this.tool("undercut", "Undercut Analysis")}${this.tool("parting", "Parting Line Analysis")}</div>
        <div class="col c5">${this.tool("symmetry", "Symmetry Check")}${this.tool("thickness", "Thickness Analysis")}${this.tool("compareD", "Compare Documents")}</div>
        <button class="big active">${ic("active")}<span>Check Active<br>Document</span>${caret()}</button>
        <div class="line"></div>
        <button class="big xp off" disabled>${ic("threeD")}<span>3DEXPERIENCE<br>Simulation<br>Connector</span></button>
        <button class="big sim">${ic("simx")}<span>SimulationXpress<br>Analysis Wizard</span></button>
        <button class="big flo">${ic("flo")}<span>FloXpress<br>Analysis<br>Wizard</span></button>
        <button class="big dfm">${ic("dfm")}<span>DFMXpress<br>Analysis<br>Wizard</span></button>
      </section>
      <main>
        <svg class="scene" viewBox="0 117 1560 700" preserveAspectRatio="xMidYMid slice">
          <defs>
            <linearGradient id="spectrum" x1="1" y1="0" x2="0" y2="1"><stop offset="0" stop-color="#ffe600"/><stop offset=".2" stop-color="#39e639"/><stop offset=".4" stop-color="#00c8ff"/><stop offset=".55" stop-color="#4a3cff"/><stop offset=".7" stop-color="#e600e6"/><stop offset="1" stop-color="#ff0033"/></linearGradient>
            <linearGradient id="spectrum2"><stop offset="0" stop-color="#2430d8"/><stop offset=".35" stop-color="#22b84a"/><stop offset=".65" stop-color="#f3e11d"/><stop offset="1" stop-color="#e8361c"/></linearGradient>
          </defs>
          ${scene}
        </svg>
        <nav>
          <button class="t1">Simulation</button><button class="t2">MBD</button><button class="t3">SOLIDWORKS CAM</button><button class="t4">SOLIDWORKS CAM TBM</button><button class="t5">Analysis Preparation</button>
        </nav>
        <div class="work">
          <aside class="tree">
            <div class="strip"></div>
            <div class="branch"><div class="slot"></div><svg class="node" viewBox="0 0 20 20">${part}</svg></div>
            <div class="mark"></div>
            <div class="track"><svg viewBox="0 0 16 8"><path d="M10 1L6 6l3 4" fill="none" stroke="#555" stroke-width="2"/></svg><span></span><svg viewBox="0 0 16 8"><path d="M6 1l4 5-3 4" fill="none" stroke="#555" stroke-width="2"/></svg></div>
          </aside>
          <div class="hud">
            ${["fit", "area", "prev", "section", "dynamic", "orient"].map((n) => this.hud(n))}${caret()}
            ${this.hud("style")}${caret()}${this.hud("eye")}${caret()}${this.hud("appear")}${this.hud("scene")}${caret()}${this.hud("screen")}${caret()}
          </div>
        </div>
        <div class="docs">
          <svg viewBox="0 0 14 14"><path d="M1 1h12v12H1zM1 4V1h12" fill="none" stroke="#444" stroke-width="1.300"/><path d="M7 4v6L3 7z" fill="#444"/></svg>
          <svg viewBox="0 0 14 14"><path d="M1 1h12v12H1z" fill="none" stroke="#444" stroke-width="1.300"/><path d="M7 4v6l4-3z" fill="#444"/></svg>
          <svg viewBox="0 0 14 14"><path d="M2 12h10" stroke="#444" stroke-width="2"/></svg>
          <svg viewBox="0 0 14 14"><path d="M1 6h9v7H1zM5 6V1h9v7h-4" fill="none" stroke="#444" stroke-width="1.300"/></svg>
        </div>
      </main>
      <mass-properties role="dialog" aria-label="Mass Properties"></mass-properties>`;
  }
}
